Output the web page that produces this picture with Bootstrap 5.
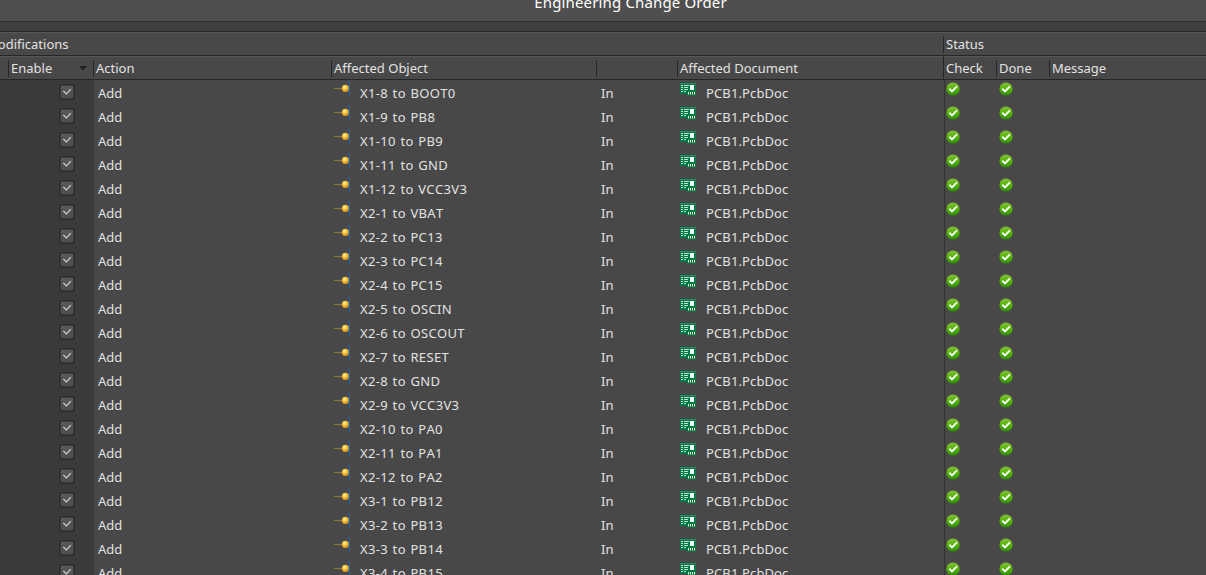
<!DOCTYPE html>
<html lang="en">
<head>
<meta charset="utf-8">
<title>Engineering Change Order</title>
<link rel="stylesheet" href="https://cdn.jsdelivr.net/npm/bootstrap@5.3.0/dist/css/bootstrap.min.css">
<style>
body{background:#484848;color:#e2e2e2;font:13px/18px "Noto Sans","Segoe UI",sans-serif;width:1206px;height:575px}
.titlebar{height:22px;background:#4f4f4f;border-bottom:1px solid #2d2d2d;color:#fff;font-size:15px;line-height:20px}
.titlebar span{margin-top:-8px;margin-left:55px;letter-spacing:.15px}
.strip{height:9px;background:#404040}
.eco-grid{display:grid;grid-template-columns:8px 85px 238px 265px 81px 266px 53px 53px 1fr}
.band{height:24px;border-top:1px solid #262626;box-shadow:inset 0 1px #575757;background:#484848}
.band > div{margin-top:4px;height:17px;line-height:17px;padding-left:2px;white-space:nowrap}
.band > .group-name{margin-left:-16px}
.sep{border-left:1px solid #262626}
.band > .tall{margin-top:0;height:23px;padding-top:4px}
.sort{margin:5px 5px 0 0}
.rows-area{border-top:1px solid #262626;height:496px}
.line{height:24px}
.line > div{height:24px;white-space:nowrap}
.dim{grid-column:span 2;background:#3b3b3b;width:94px}
.txt{line-height:24px;padding-top:1px}
.net{font-kerning:none;letter-spacing:.35px;word-spacing:.8px}
.doc{letter-spacing:.12px}
.status-edge{border-left:1px solid #333;margin-left:1px}
svg{display:block;flex:none}
.box{margin:4px 0 0 59px}
.act,.rel{padding-left:5px}
.pin{margin:0 10px 0 3px}
.pcb{margin:3px 10px 0 3px}
.ok{margin:1.5px 0 0 1.4px}
.done{margin-left:3.4px}
</style>
<script src="https://cdn.jsdelivr.net/npm/bootstrap@5.3.0/dist/js/bootstrap.bundle.min.js"></script>
</head>
<body class="overflow-hidden">
<svg width="0" height="0" class="position-absolute">
  <defs>
    <radialGradient id="gold" cx=".4" cy=".35" r=".65"><stop offset="0" stop-color="#fff0a0"/><stop offset=".5" stop-color="#f8bd38"/><stop offset="1" stop-color="#b77a18"/></radialGradient>
    <linearGradient id="green" x2="0" y2="1"><stop offset="0" stop-color="#86bd40"/><stop offset=".45" stop-color="#58b60a"/><stop offset="1" stop-color="#2f8a08"/></linearGradient>
    <linearGradient id="boxfill" x2="0" y2="1"><stop offset="0" stop-color="#5a5a5a"/><stop offset="1" stop-color="#4c4c4c"/></linearGradient>
    <symbol id="box" viewBox="0 0 16 16"><rect x=".9" y=".9" width="14.2" height="14.2" rx="2" fill="url(#boxfill)" stroke="#272727" stroke-width="1.2"/><path d="M4.3 6.8 7.3 9.8 11.8 5.2" fill="none" stroke="#d4d4d4" stroke-width="1.2"/></symbol>
    <symbol id="pin" viewBox="0 0 16 16"><path d="M0 8.5H9" stroke="#967134"/><circle cx="11.5" cy="8.5" r="3.7" fill="url(#gold)"/><path d="M15.5 1V16" stroke="#086bb0"/></symbol>
    <symbol id="pcb" viewBox="0 0 16 13"><path d="M0 0H16V12.5H7V11H0Z" fill="#08774a"/><path d="M0 .5H16" stroke="#14945f"/><path d="M1 2.5h2M1 4.5h2M1 6.5h2M1 8.5h2M4 2.5h5M4 4.5h4M4 6.5h4M4 8.5h2" stroke="#b9e8ce"/><rect x="10" y="2" width="4" height="5" fill="#f2faf5"/><path d="M8.5 9v2.5M10.5 9v2.5M12.5 9v2.5M14.5 9v2.5" stroke="#e2f5c8"/></symbol>
    <symbol id="ok" viewBox="0 0 14 14"><circle cx="7" cy="7" r="6.6" fill="url(#green)"/><path d="M3.3 6.6 6 9.4 10.9 4.4" fill="none" stroke="#fff" stroke-width="1.8"/></symbol>
  </defs>
</svg>
<header class="titlebar d-flex justify-content-center"><span>Engineering Change Order</span></header>
<div class="strip"></div>
<div class="eco-grid band">
  <div class="group-name" style="grid-column:span 6">Modifications</div>
  <div class="sep" style="grid-column:span 3">Status</div>
</div>
<div class="eco-grid band">
  <div></div>
  <div class="sep d-flex justify-content-between"><span>Enable</span><svg class="sort" width="10" height="6"><path d="M1 1H9L5 5.4Z" fill="#222"/></svg></div>
  <div class="sep">Action</div>
  <div class="sep">Affected Object</div>
  <div class="sep"></div>
  <div class="sep">Affected Document</div>
  <div class="sep tall">Check</div>
  <div class="sep">Done</div>
  <div class="sep">Message</div>
</div>
<main class="rows-area overflow-hidden" id="changes"></main>
<script>
const nets = ["X1-8 to BOOT0","X1-9 to PB8","X1-10 to PB9","X1-11 to GND","X1-12 to VCC3V3","X2-1 to VBAT","X2-2 to PC13","X2-3 to PC14","X2-4 to PC15","X2-5 to OSCIN","X2-6 to OSCOUT","X2-7 to RESET","X2-8 to GND","X2-9 to VCC3V3","X2-10 to PA0","X2-11 to PA1","X2-12 to PA2","X3-1 to PB12","X3-2 to PB13","X3-3 to PB14","X3-4 to PB15"];
const icon = (id, w, h, cls) => `<svg class="${cls}" width="${w}" height="${h}"><use href="#${id}"/></svg>`;
document.getElementById("changes").innerHTML = nets.map(n => `
<div class="eco-grid line">
  <div class="dim d-flex">${icon("box",16,16,"box")}</div>
  <div class="txt act">Add</div>
  <div class="d-flex">${icon("pin",16,16,"pin")}<span class="txt net">${n}</span></div>
  <div class="txt rel">In</div>
  <div class="d-flex">${icon("pcb",16,13,"pcb")}<span class="txt doc">PCB1.PcbDoc</span></div>
  <div class="status-edge">${icon("ok",14,14,"ok")}</div>
  <div>${icon("ok",14,14,"ok done")}</div>
  <div></div>
</div>`).join("");
</script>
</body>
</html>
